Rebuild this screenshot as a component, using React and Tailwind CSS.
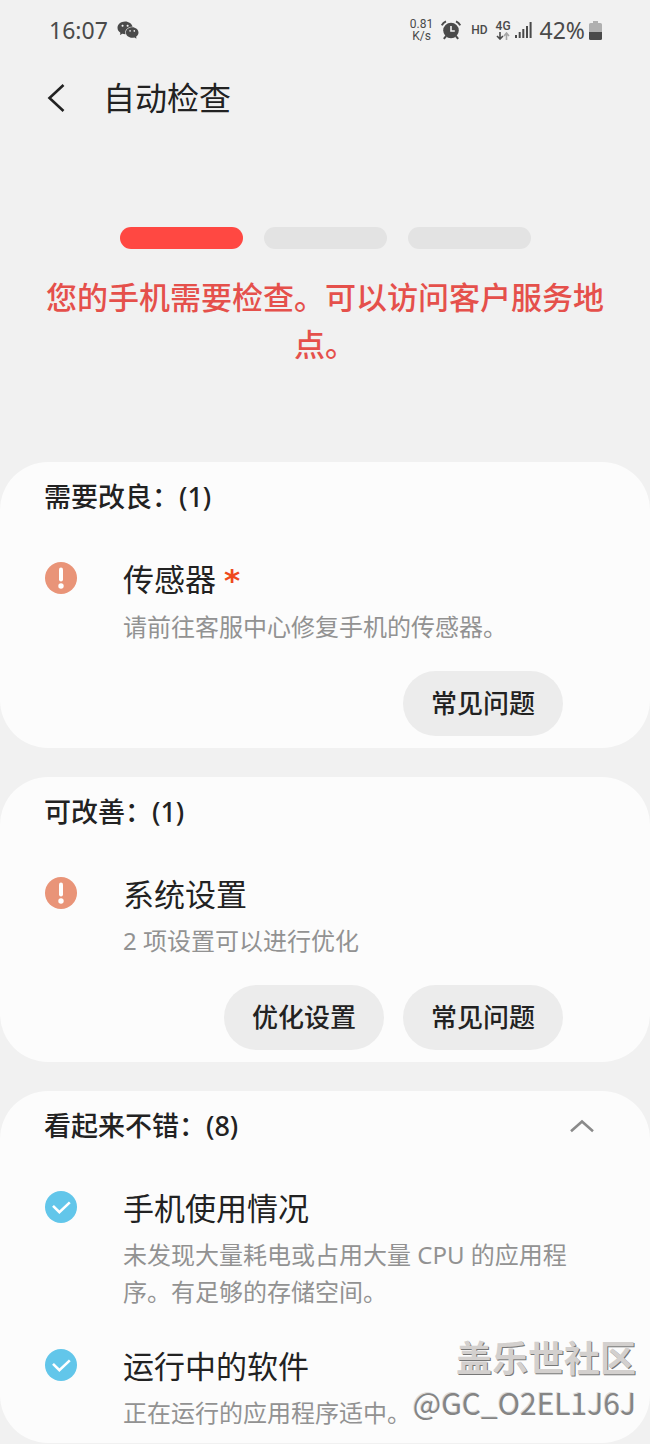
import { useState } from 'react';
import { AiFillWechat } from 'react-icons/ai';

const needsRepair = [
    {
        title: '传感器',
        required: true,
        status: 'warning',
        description: '请前往客服中心修复手机的传感器。',
        actions: ['常见问题']
    }
];

const canImprove = [
    {
        title: '系统设置',
        status: 'warning',
        description: '2 项设置可以进行优化',
        actions: ['优化设置', '常见问题']
    }
];

const looksGood = [
    {
        title: '手机使用情况',
        status: 'ok',
        description: '未发现大量耗电或占用大量 CPU 的应用程序。有足够的存储空间。'
    },
    {
        title: '运行中的软件',
        status: 'ok',
        description: '正在运行的应用程序适中。'
    }
];

function AlarmIcon() {
    return (
        <svg viewBox="0 0 20 20" className="w-5 h-5" aria-hidden="true">
            <circle cx="10" cy="10.5" r="7.8" fill="currentColor" />
            <path
                d="M.8 5.4Q2 2.6 5 1.4M19.2 5.4Q18 2.6 15 1.4M5.2 16l-2.4 2.8M14.8 16l2.4 2.8"
                stroke="currentColor"
                strokeWidth="2"
                fill="none"
            />
            <path d="M10 6v5h3.8" stroke="#f1f1f1" strokeWidth="1.6" fill="none" />
        </svg>
    );
}

function SignalIcon() {
    return (
        <svg viewBox="0 0 17 17" className="w-[17px] h-[17px]" fill="currentColor" aria-hidden="true">
            <rect x="0" y="13" width="2" height="3" />
            <rect x="3.7" y="10" width="2" height="6" />
            <rect x="7.3" y="7" width="2" height="9" />
            <rect x="11" y="4" width="2" height="12" />
            <rect x="14.6" y="0" width="2" height="16" />
        </svg>
    );
}

function DataArrows() {
    return (
        <svg viewBox="0 0 14 8" className="w-3.5 h-2" fill="none" strokeWidth="1.6" aria-hidden="true">
            <path d="M4 0v7M1 4l3 3 3-3" stroke="currentColor" />
            <path d="M10.5 8V1M8 4l2.5-3L13 4" stroke="#a5a5a5" />
        </svg>
    );
}

function BatteryIcon() {
    return (
        <svg viewBox="0 0 13 19" className="w-[13px] h-[19px]" aria-hidden="true">
            <path d="M4 0h5v2h2.5q1.5 0 1.5 1.5V11H0V3.5Q0 2 1.5 2H4z" fill="#b0b0b0" />
            <path d="M0 11h13v6.5q0 1.5-1.5 1.5h-10Q0 19 0 17.5z" fill="currentColor" />
        </svg>
    );
}

function StatusIcon({ status }) {
    if (status === 'ok') {
        return (
            <svg viewBox="0 0 32 32" className="w-8 h-8" aria-hidden="true">
                <circle cx="16" cy="16" r="16" fill="#62c6ea" />
                <path
                    d="m8 14.8 6.4 6.4L24.8 11.4"
                    fill="none"
                    stroke="#fff"
                    strokeWidth="2.6"
                />
            </svg>
        );
    }

    return (
        <svg viewBox="0 0 32 32" className="w-8 h-8" aria-hidden="true">
            <circle cx="16" cy="16" r="16" fill="#e99478" />
            <path d="M16 7.4v10" stroke="#fff" strokeWidth="4" strokeLinecap="round" />
            <circle cx="16" cy="24" r="2.7" fill="#fff" />
        </svg>
    );
}

function StatusBar() {
    return (
        <div className="flex items-center justify-between h-[60px] pl-[49px] pr-12 text-[#4a4a4a]">
            <div className="flex items-center gap-2">
                <span className="text-[23px] leading-8">16:07</span>
                <AiFillWechat className="w-6 h-6" />
            </div>
            <div className="flex items-center">
                <div className="flex flex-col items-center mr-2 text-xs leading-3 font-['Roboto',sans-serif]">
                    <span>0.81</span>
                    <span>K/s</span>
                </div>
                <AlarmIcon />
                <span className="ml-2.5 mr-2 text-xs font-medium font-['Roboto',sans-serif]">HD</span>
                <div className="flex flex-col items-center mr-1 text-xs leading-3 font-medium font-['Roboto',sans-serif]">
                    4G
                    <DataArrows />
                </div>
                <SignalIcon />
                <span className="ml-2 mr-1 text-[23px] leading-8">42%</span>
                <BatteryIcon />
            </div>
        </div>
    );
}

function CheckItem({ item }) {
    return (
        <li>
            <div className="flex items-start pl-[45px] pr-[72px]">
                <div className="shrink-0 w-[78px] pt-[5px]">
                    <StatusIcon status={item.status} />
                </div>
                <div>
                    <h3 className="text-[31px] leading-11 text-[#222]">
                        {item.title}
                        {item.required && (
                            <span className="ml-2 font-bold font-['DejaVu_Sans',sans-serif] text-[#ee4a1e]">*</span>
                        )}
                    </h3>
                    <p className="mt-1.5 text-2xl leading-[37px] text-[#929292]">{item.description}</p>
                </div>
            </div>
            {item.actions && (
                <div className="flex justify-end gap-[19px] mt-[26px] pr-[87px]">
                    {item.actions.map((action) => (
                        <button
                            key={action}
                            type="button"
                            className="h-[65px] px-7 rounded-full bg-[#ececec] text-[26px] font-medium text-[#222]"
                        >
                            {action}
                        </button>
                    ))}
                </div>
            )}
        </li>
    );
}

function Section({ title, items, collapsible }) {
    const [open, setOpen] = useState(true);

    return (
        <section className="pt-[13px] pb-3 rounded-[48px] bg-[#fcfcfc]">
            <div className="flex items-center justify-between pl-11 pr-[55px]">
                <h2 className="text-[27px] leading-11 font-medium text-[#222]">{title}</h2>
                {collapsible && (
                    <button type="button" aria-label="收起" aria-expanded={open} onClick={() => setOpen(!open)}>
                        <svg viewBox="0 0 26 14" className="w-[26px] h-3.5" fill="none" aria-hidden="true">
                            <path d="M2 12.2 13 2.6l11 9.6" stroke="#8a8a8a" strokeWidth="2.6" />
                        </svg>
                    </button>
                )}
            </div>
            {open && (
                <ul className="flex flex-col gap-[34px] mt-[38px]">
                    {items.map((item) => (
                        <CheckItem key={item.title} item={item} />
                    ))}
                </ul>
            )}
        </section>
    );
}

export default function App() {
    return (
        <div
            lang="zh-CN"
            className="relative min-h-screen bg-[#f1f1f1] font-['Noto_Sans','Noto_Sans_CJK_SC',sans-serif]"
        >
            <StatusBar />

            {/* Header */}
            <header className="flex items-center h-[76px] pl-[47px]">
                <button type="button" aria-label="返回" className="mr-[38px]">
                    <svg viewBox="0 0 18 28" className="w-[18px] h-7" fill="none" aria-hidden="true">
                        <path d="M16.5 1 2.5 14l14 13" stroke="#222" strokeWidth="2.6" />
                    </svg>
                </button>
                <h1 className="text-[32px] leading-11 text-[#222]">自动检查</h1>
            </header>

            {/* Result */}
            <div className="px-9 pt-[91px] pb-[94px]">
                <div className="flex justify-center gap-[21px]">
                    <span className="w-[123px] h-[22px] rounded-full bg-[#ff4842]" />
                    <span className="w-[123px] h-[22px] rounded-full bg-[#e3e3e3]" />
                    <span className="w-[123px] h-[22px] rounded-full bg-[#e3e3e3]" />
                </div>
                <p className="mt-[25px] text-[31px] leading-[47px] font-medium text-center text-[#e5504b]">
                    您的手机需要检查。可以访问客户服务地点。
                </p>
            </div>

            <main className="flex flex-col gap-[29px]">
                <Section title="需要改良：(1)" items={needsRepair} />
                <Section title="可改善：(1)" items={canImprove} />
                <Section title="看起来不错：(8)" items={looksGood} collapsible />
            </main>

            {/* Watermark */}
            <div className="absolute right-3.5 bottom-5 text-right pointer-events-none font-['Noto_Sans_CJK_SC',sans-serif]">
                <div className="text-4xl leading-12 font-bold text-[#d3d0ce] [text-shadow:1px_1px_0_#777]">
                    盖乐世社区
                </div>
                <div className="text-[30px] leading-11 text-[#858585] [text-shadow:-1px_-1px_0_#ddd]">
                    @GC_O2EL1J6J
                </div>
            </div>
        </div>
    );
}
